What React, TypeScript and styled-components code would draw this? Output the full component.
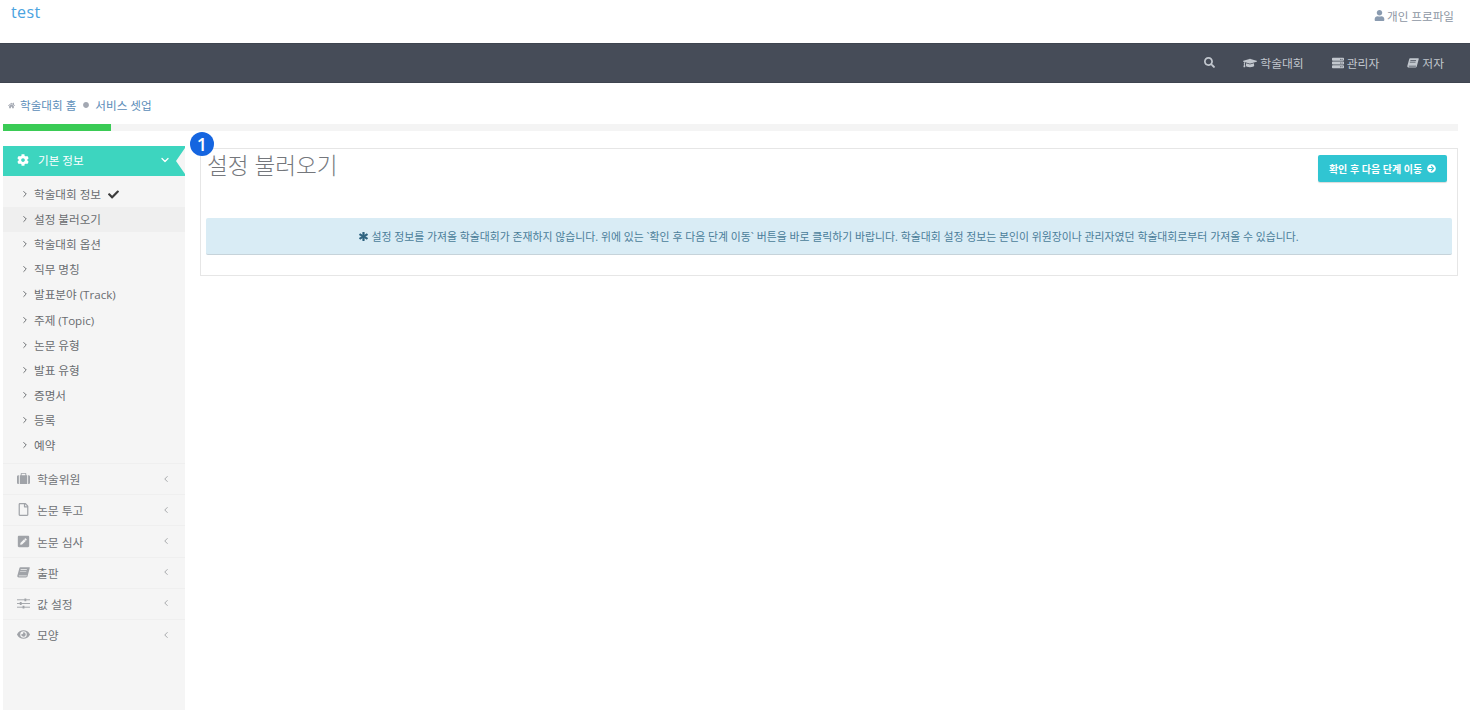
import * as React from 'react';
import styled, { createGlobalStyle } from 'styled-components';
import { ChevronDown, ChevronLeft, ChevronRight } from 'lucide-react';
import {
  FaArrowCircleRight, FaAsterisk, FaCheck, FaCircle, FaCog, FaEye,
  FaGraduationCap, FaHome, FaPenSquare, FaRegFile, FaSearch, FaServer, FaUser,
} from 'react-icons/fa';

const GlobalStyle = createGlobalStyle`
  html, body { margin: 0; padding: 0; background: #fff; }
  body {
    font-family: "Open Sans", "Noto Sans CJK KR", sans-serif;
    font-size: 11.6px;
    color: #6b6f75;
  }
`;

const Page = styled.div`
  width: 1470px;
  height: 723px;
  overflow: hidden;
  display: flex;
  flex-direction: column;
`;

const TopBar = styled.header`
  height: 43px;
  display: flex;
  justify-content: space-between;
  padding: 0 16px 0 11px;
`;

const Brand = styled.a`
  font-size: 16px;
  line-height: 25px;
  letter-spacing: 0.4px;
  color: #4aa3df;
`;

const ProfileLink = styled.a`
  display: flex;
  align-items: center;
  gap: 2px;
  height: 31px;
  color: #8d96a3;
  font-size: 11.6px;
  svg { font-size: 11px; color: #8a9bb0; }
`;

const NavBar = styled.nav`
  height: 40px;
  box-sizing: border-box;
  display: flex;
  justify-content: flex-end;
  align-items: center;
  gap: 28px;
  padding: 0 26px 1px 0;
  background: #464c58;
  border-top: 1px solid #3e444f;
  border-bottom: 1px solid #3e444f;
`;

const NavItem = styled.a`
  display: flex;
  align-items: center;
  gap: 3px;
  color: #c2c7ce;
  font-size: 11.8px;
  svg { font-size: 12px; color: #c2c7ce; }
  svg.cap { font-size: 14px; }
  svg.search { font-size: 11px; }
`;

const Breadcrumb = styled.div`
  height: 41px;
  box-sizing: border-box;
  padding: 3px 0 0 8px;
  display: flex;
  align-items: center;
  align-self: flex-start;
  color: #5b8db8;
  font-size: 11.6px;
`;

const CrumbIcon = styled.span<{ $sep?: boolean }>`
  display: inline-flex;
  margin: ${({ $sep }) => ($sep ? '0 6px 0 7px' : '0 5px 0 0')};
  color: #a3a8b2;
  svg { font-size: ${({ $sep }) => ($sep ? 6 : 7)}px; }
`;

const Progress = styled.div`
  margin: 0 12px 0 3px;
  height: 7px;
  background: #f4f4f4;
`;

const ProgressFill = styled.div`
  height: 100%;
  background: #3acb55;
`;

const Body = styled.div`
  flex: 1;
  display: flex;
  align-items: flex-start;
  gap: 15px;
  padding: 15px 12px 0 3px;
  position: relative;
`;

const Sidebar = styled.aside`
  width: 182px;
  height: 564px;
  flex: none;
  background: #f5f5f5;
`;

const ActiveHead = styled.div`
  height: 30px;
  display: flex;
  align-items: center;
  padding: 0 14px 2px 14px;
  box-sizing: border-box;
  background: #3dd5bf;
  color: #fff;
  clip-path: polygon(0 0, 100% 0, 100% 2px, calc(100% - 9px) 50%, 100% calc(100% - 2px), 100% 100%, 0 100%);
`;

const HeadLabel = styled.span`
  flex: 1;
  margin-left: 9px;
  font-size: 11.6px;
`;

const SubList = styled.ul`
  list-style: none;
  margin: 0;
  padding: 6px 0 5px;
`;

const SubItem = styled.li<{ $active?: boolean }>`
  height: 25.1px;
  display: flex;
  align-items: center;
  padding: 0 0 1px 17px;
  box-sizing: border-box;
  font-size: 11.6px;
  color: #696c70;
  background: ${({ $active }) => ($active ? '#efefef' : 'transparent')};
  svg.chev { margin-right: 4px; color: #5f6266; }
  svg.done { font-size: 11px; margin-left: 7px; color: #3b3b3b; }
`;

const GroupRow = styled.div`
  height: 31.2px;
  box-sizing: border-box;
  display: flex;
  align-items: center;
  padding: 0 14px 1px 14px;
  border-top: 1px solid #efefef;
  color: #6f7276;
  font-size: 11.8px;
`;

const GroupIcon = styled.span`
  width: 13px;
  display: inline-flex;
  justify-content: center;
  color: #a0a3a8;
  svg { font-size: 13px; }
`;

const GroupLabel = styled.span`
  flex: 1;
  margin-left: 7px;
`;

const Caret = styled(ChevronLeft)`
  color: #96999c;
`;

const Panel = styled.section`
  flex: 1;
  height: 128px;
  margin-top: 2px;
  box-sizing: border-box;
  border: 1px solid #e6e6e6;
  padding: 0 5px 0 5px;
`;

const PanelHead = styled.div`
  display: flex;
  justify-content: space-between;
  align-items: flex-start;
  height: 69px;
  padding-left: 1px;
`;

const Title = styled.h1`
  margin: 0;
  font-size: 22.6px;
  font-weight: 300;
  line-height: 34px;
  color: #74777c;
`;

const NextButton = styled.button`
  margin: 6px 5px 0 0;
  height: 27px;
  width: 129px;
  display: flex;
  align-items: center;
  justify-content: center;
  gap: 5px;
  border: none;
  border-radius: 2px;
  background: #30c5d2;
  color: #fff;
  font-family: inherit;
  font-size: 10px;
  font-weight: 700;
  box-shadow: 0 1px 1px rgba(0, 0, 0, 0.15);
  svg { font-size: 9px; }
`;

const Notice = styled.div`
  height: 37px;
  box-sizing: border-box;
  display: flex;
  align-items: center;
  justify-content: center;
  gap: 3px;
  background: #d9ecf5;
  border-radius: 2px;
  border-bottom: 1px solid #c6d3da;
  color: #4a7d99;
  font-size: 10.86px;
  svg { font-size: 9px; color: #2f6480; stroke: currentColor; stroke-width: 40px; }
`;

const StepBadge = styled.span`
  position: absolute;
  left: 190px;
  top: 1px;
  width: 24px;
  height: 24px;
  border-radius: 50%;
  background: #1565e0;
  color: #fff;
  display: flex;
  align-items: center;
  justify-content: center;
  font-size: 18px;
  font-weight: 600;
  line-height: 1;
  z-index: 2;
`;

const BookIcon = () => (
  <svg width="1em" height="1em" viewBox="0 0 16 14" fill="currentColor">
    <path d="M4 .5h11c.6 0 .9.5.7 1.100L13 11.600c-.3.8-1 1.400-1.900 1.400H2.200C1 13 .2 12 .4 10.900L3 1.500C3.200.9 3.500.5 4 .5zm.6 2.600-.2.8h7.600l.2-.8H4.600zm-.7 2.300-.2.8h7.600l.2-.8H3.900zM2.300 10.600c-.2.7.2 1.100.8 1.100h8.200c.3 0 .5-.2.6-.5l.2-.6H2.300z" />
  </svg>
);

const BriefcaseIcon = () => (
  <svg width="1em" height="1em" viewBox="0 0 14 12" fill="currentColor">
    <path d="M5 0h4c.6 0 1 .4 1 1v1.500h2.500c.8 0 1.500.7 1.500 1.500v6.500c0 .8-.7 1.500-1.500 1.500H12V2.500h-1V12H3V2.500H2V12h-.5C.7 12 0 11.300 0 10.500V4c0-.8.7-1.500 1.500-1.500H4V1c0-.6.4-1 1-1zm0 1v1.500h4V1H5z" />
  </svg>
);

const SlidersIcon = () => (
  <svg width="1em" height="1em" viewBox="0 0 14 12" fill="none" stroke="currentColor" strokeWidth="1">
    <path d="M0 2h14M0 6h14M0 10h14" />
    <path d="M9 .5v3M4 4.500v3M7 8.500v3" strokeWidth="2" />
  </svg>
);

const subItems = ['학술대회 정보', '설정 불러오기', '학술대회 옵션', '직무 명칭', '발표분야 (Track)', '주제 (Topic)', '논문 유형', '발표 유형', '증명서', '등록', '예약'];

const groups: { label: string; icon: React.ReactNode }[] = [
  { label: '학술위원', icon: <BriefcaseIcon /> },
  { label: '논문 투고', icon: <FaRegFile /> },
  { label: '논문 심사', icon: <FaPenSquare /> },
  { label: '출판', icon: <BookIcon /> },
  { label: '값 설정', icon: <SlidersIcon /> },
  { label: '모양', icon: <FaEye /> },
];

export default function App() {
  return (
    <Page>
      <GlobalStyle />
      <TopBar>
        <Brand>test</Brand>
        <ProfileLink><FaUser />개인 프로파일</ProfileLink>
      </TopBar>
      <NavBar>
        <NavItem><FaSearch className="search" /></NavItem>
        <NavItem><FaGraduationCap className="cap" />학술대회</NavItem>
        <NavItem><FaServer />관리자</NavItem>
        <NavItem><BookIcon />저자</NavItem>
      </NavBar>
      <Breadcrumb>
        <CrumbIcon><FaHome /></CrumbIcon>학술대회 홈
        <CrumbIcon $sep><FaCircle /></CrumbIcon>서비스 셋업
      </Breadcrumb>
      <Progress><ProgressFill style={{ width: '108px' }} /></Progress>
      <Body>
        <Sidebar>
          <ActiveHead>
            <FaCog size={12} />
            <HeadLabel>기본 정보</HeadLabel>
            <ChevronDown size={12} strokeWidth={2.6} />
          </ActiveHead>
          <SubList>
            {subItems.map((item, i) => (
              <SubItem key={item} $active={i === 1}>
                <ChevronRight className="chev" size={10} strokeWidth={2.2} />
                {item}
                {i === 0 && <FaCheck className="done" />}
              </SubItem>
            ))}
          </SubList>
          {groups.map(g => (
            <GroupRow key={g.label}>
              <GroupIcon>{g.icon}</GroupIcon>
              <GroupLabel>{g.label}</GroupLabel>
              <Caret size={10} strokeWidth={2} />
            </GroupRow>
          ))}
        </Sidebar>
        <Panel>
          <PanelHead>
            <Title>설정 불러오기</Title>
            <NextButton>확인 후 다음 단계 이동 <FaArrowCircleRight /></NextButton>
          </PanelHead>
          <Notice>
            <FaAsterisk />
            설정 정보를 가져올 학술대회가 존재하지 않습니다. 위에 있는 `확인 후 다음 단계 이동` 버튼을 바로 클릭하기 바랍니다. 학술대회 설정 정보는 본인이 위원장이나 관리자였던 학술대회로부터 가져올 수 있습니다.
          </Notice>
        </Panel>
        <StepBadge>1</StepBadge>
      </Body>
    </Page>
  );
}
